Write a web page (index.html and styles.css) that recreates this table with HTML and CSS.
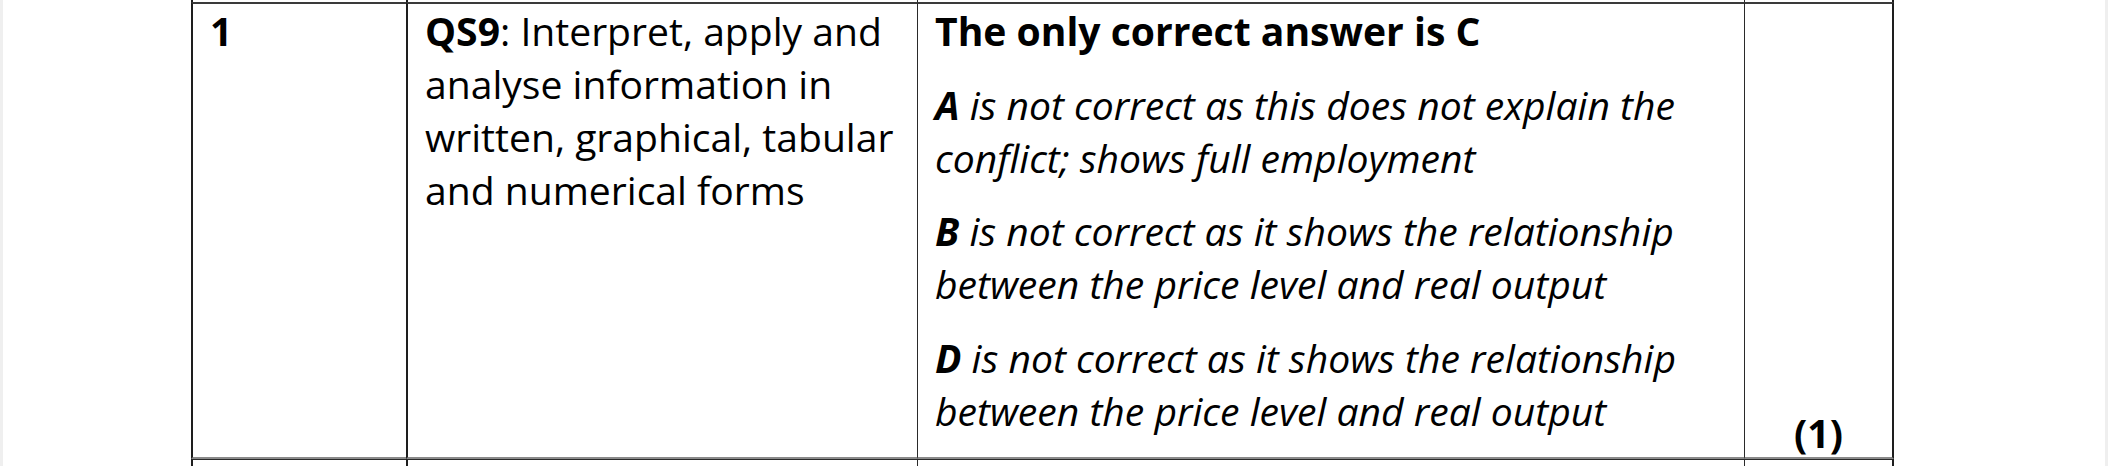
FILE: index.html
```html
<!DOCTYPE html>
<html lang="en">
<head>
<meta charset="utf-8">
<title>Mark scheme</title>
<link rel="stylesheet" href="styles.css">
</head>
<body>
<div class="page">
  <table class="scheme">
    <colgroup>
      <col class="c-num">
      <col class="c-skill">
      <col class="c-answer">
      <col class="c-mark">
    </colgroup>
    <tbody>
      <tr class="row-edge row-prev"><td class="cell"></td><td class="cell"></td><td class="cell thin"></td><td class="cell thin last"></td></tr>
      <tr class="row-main">
        <td class="cell num"><p class="strong">1</p></td>
        <td class="cell skill"><p><b>QS9</b>: Interpret, apply and analyse information in written, graphical, tabular and numerical forms</p></td>
        <td class="cell thin answer">
          <p class="strong">The only correct answer is C</p>
          <p class="why"><b>A</b> is not correct as this does not explain the conflict; shows full employment</p>
          <p class="why"><b>B</b> is not correct as it shows the relationship between the price level and real output</p>
          <p class="why"><b>D</b> is not correct as it shows the relationship between the price level and real output</p>
        </td>
        <td class="cell thin last mark"><p class="strong">(1)</p></td>
      </tr>
      <tr class="row-edge row-next"><td class="cell"></td><td class="cell"></td><td class="cell thin"></td><td class="cell thin last"></td></tr>
    </tbody>
  </table>
</div>
</body>
</html>
```

FILE: styles.css
```css
* {
  box-sizing: border-box;
}

html,
body {
  margin: 0;
  padding: 0;
  height: 100%;
  overflow: hidden;
  background: #efefef;
}

.page {
  margin: 0 3px;
  height: 100%;
  background: #ffffff;
  padding-left: 188px;
  font-family: "Open Sans", "Noto Sans", "Liberation Sans", sans-serif;
  font-size: 39.1px;
  line-height: normal;
  color: #000;
}

.scheme {
  border-collapse: separate;
  border-spacing: 0;
  table-layout: fixed;
  width: 1703px;
}

.c-num { width: 215px; }
.c-skill { width: 511px; }
.c-answer { width: 827px; }
.c-mark { width: 150px; }

.cell {
  border-left: 2px solid #1e1e1e;
  padding: 0 17px;
  vertical-align: top;
}

.cell.thin {
  border-left: 1px solid #2a2a2a;
}

.cell.last {
  border-right: 2px solid #1e1e1e;
}

.row-prev .cell {
  height: 2px;
  padding: 0;
}

.row-next .cell {
  height: 30px;
  padding: 0;
  border-top: 1px solid #2a2a2a;
}

.row-main .cell {
  border-top: 2px solid #3a3a3a;
  border-bottom: 2px solid #8a8a8a;
}

.cell p {
  margin: 0;
}

.strong,
.cell b {
  font-weight: 700;
}

.answer p {
  margin: 0 0 20.6px;
}

.why {
  font-style: italic;
}

.mark {
  text-align: center;
  vertical-align: bottom;
}

.mark p {
  line-height: 1.2;
}
```
